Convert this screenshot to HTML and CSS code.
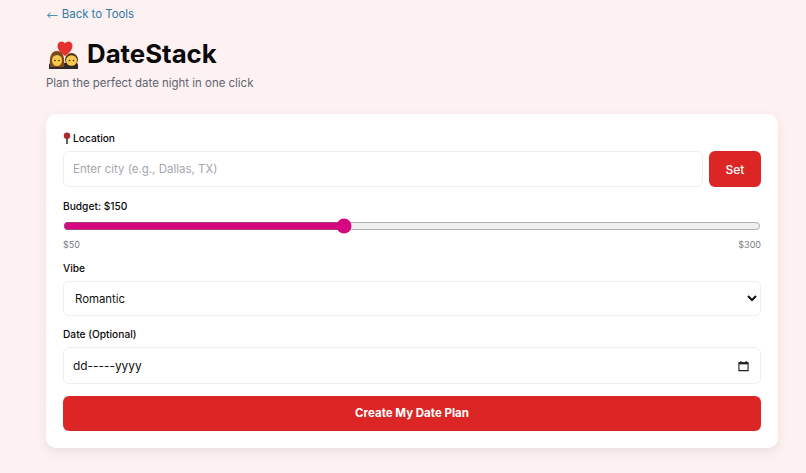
FILE: index.html
```html
<!DOCTYPE html>
<html lang="en">
<head>
  <meta charset="UTF-8">
  <meta name="viewport" content="width=device-width, initial-scale=1.0">
  <title>DateStack</title>
  <link rel="stylesheet" href="styles.css">
</head>
<body>
  <!-- Header -->
  <a href="#" class="back-link"><span class="back-arrow">⟵</span> Back to Tools</a>
  <h1 class="title">
    <svg class="couple-icon" viewBox="0 0 32 30" aria-hidden="true">
      <!-- bodies -->
      <path d="M3 30v-4c0-2 3-3 8-3s8 1 8 3v4z" fill="#2f2a2a"/>
      <path d="M17 30v-4c0-2 3-3 8-3s7 1 7 3v4z" fill="#2f2a2a"/>
      <!-- her hair and face -->
      <path d="M4 28c-1-10 1-16 7-16s8 6 7 16z" fill="#7d4a1c"/>
      <ellipse cx="11" cy="21.500" rx="5" ry="5.500" fill="#f8c94c"/>
      <!-- his hair and face -->
      <circle cx="25.500" cy="20.500" r="6.500" fill="#5a3416"/>
      <ellipse cx="25.500" cy="21.500" rx="5.500" ry="5.200" fill="#f8c94c"/>
      <!-- eyes -->
      <circle cx="9" cy="21.500" r=".8" fill="#222"/>
      <circle cx="13" cy="21.500" r=".8" fill="#222"/>
      <circle cx="23.500" cy="21.500" r=".8" fill="#222"/>
      <circle cx="27.500" cy="21.500" r=".8" fill="#222"/>
      <!-- heart -->
      <path d="M19 17C14 13.500 11.500 10.500 11.500 7 11.500 4.200 13.500 2.500 15.500 2.500c1.500 0 2.800.8 3.500 2 .7-1.200 2-2 3.500-2 2 0 4 1.700 4 4.500 0 3.500-2.500 6.500-7.500 10z" fill="#e5322d"/>
    </svg>
    DateStack
  </h1>
  <p class="subtitle">Plan the perfect date night in one click</p>

  <!-- Form Card -->
  <form class="card">
    <div class="field">
      <label class="field-label">
        <svg class="pin-icon" viewBox="0 0 8 13" aria-hidden="true">
          <rect x="3" y="6" width="2" height="7" fill="#4d5a52"/>
          <circle cx="4" cy="4" r="3.500" fill="#b02a30"/>
        </svg>
        Location
      </label>
      <div class="location-row">
        <input class="text-input" type="text" placeholder="Enter city (e.g., Dallas, TX)">
        <button type="button" class="set-btn">Set</button>
      </div>
    </div>

    <div class="field budget-field">
      <label class="field-label">Budget: $150</label>
      <input class="budget-slider" type="range" min="50" max="300" value="150">
      <div class="budget-range"><span>$50</span><span>$300</span></div>
    </div>

    <div class="field vibe-field">
      <label class="field-label">Vibe</label>
      <select class="vibe-select">
        <option>Romantic</option>
        <option>Adventurous</option>
        <option>Casual</option>
      </select>
    </div>

    <div class="field date-field">
      <label class="field-label">Date (Optional)</label>
      <div class="date-input">
        <span>dd-----yyyy</span>
        <svg class="calendar-icon" viewBox="0 0 12 12" aria-hidden="true">
          <path d="M1 2.500h10V11H1z" fill="none" stroke="#222" stroke-width="1.200"/>
          <path d="M1 1.800h10v2.400H1z" fill="#222"/>
          <path d="M3 .5v1.500M9 .5v1.500" stroke="#222" stroke-width="1.200"/>
        </svg>
      </div>
    </div>

    <button type="button" class="create-btn">Create My Date Plan</button>
  </form>
</body>
</html>
```

FILE: styles.css
```css
/* General Styles */
body {
  margin: 0;
  padding: 6px 28px 26px 46px;
  min-height: 473px;
  box-sizing: border-box;
  font-family: Inter, "Liberation Sans", sans-serif;
  color: #0a0a0a;
  background: linear-gradient(135deg, #fdf1f1, #fef1f2);
}

/* Header */
.back-link {
  display: block;
  height: 16px;
  font-size: 11.400px;
  line-height: 16px;
  color: #2b7ba8;
  text-decoration: none;
}

.back-arrow {
  font-size: 9.400px;
  line-height: 1;
}

.title {
  display: flex;
  align-items: center;
  gap: 9px;
  margin: 16px 0 0;
  font-size: 25.800px;
  line-height: 32px;
  font-weight: 700;
}

.couple-icon {
  width: 32px;
  height: 30px;
}

.subtitle {
  margin: 4px 0 0;
  font-size: 11.450px;
  line-height: 18px;
  color: #5f6470;
}

/* Form Card */
.card {
  margin-top: 22px;
  padding: 17px 17px 17.500px;
  background: #fff;
  border-radius: 10px;
  box-shadow: 0 4px 12px rgba(0, 0, 0, 0.08);
}

.field-label {
  display: flex;
  align-items: center;
  gap: 2px;
  font-size: 10.200px;
  line-height: 14px;
  font-weight: 500;
}

.pin-icon {
  width: 8px;
  height: 12px;
}

.location-row {
  display: flex;
  gap: 6px;
  margin-top: 6px;
}

.text-input {
  flex: 1;
  min-width: 0;
  height: 36px;
  box-sizing: border-box;
  padding: 0 9px;
  border: 1px solid #eeeeee;
  border-radius: 6px;
  font: 11.500px Inter, sans-serif;
}

.text-input::placeholder {
  color: #a4a7ae;
}

.set-btn {
  width: 52px;
  height: 36px;
  border: none;
  border-radius: 6px;
  background: #dc2626;
  color: white;
  font: 500 12px Inter, sans-serif;
}

/* Budget */
.budget-field {
  margin-top: 12px;
}

.budget-slider {
  display: block;
  width: 100%;
  height: 16px;
  margin: 5px 0 0;
  accent-color: #d6087f;
}

.budget-range {
  display: flex;
  justify-content: space-between;
  margin-top: 4px;
  font-size: 9px;
  line-height: 14px;
  color: #7a7d85;
}

/* Vibe and Date */
.vibe-field {
  margin-top: 9px;
}

.vibe-select {
  display: block;
  width: 100%;
  height: 35px;
  margin-top: 6px;
  padding: 0 7px;
  border: 1px solid #eeeeee;
  border-radius: 6px;
  background: #fff;
  color: #111;
  font: 11.400px Inter, sans-serif;
}

.date-field {
  margin-top: 11px;
}

.date-input {
  display: flex;
  justify-content: space-between;
  align-items: center;
  height: 37px;
  box-sizing: border-box;
  margin-top: 6px;
  padding: 0 11px 0 9px;
  border: 1px solid #eeeeee;
  border-radius: 6px;
  font-size: 11.900px;
  color: #111;
}

.calendar-icon {
  width: 11px;
  height: 12px;
}

.create-btn {
  display: block;
  width: 100%;
  height: 34.500px;
  margin-top: 12px;
  border: none;
  border-radius: 6px;
  background: #dc2626;
  color: white;
  font: 700 11.500px Inter, sans-serif;
}
```
